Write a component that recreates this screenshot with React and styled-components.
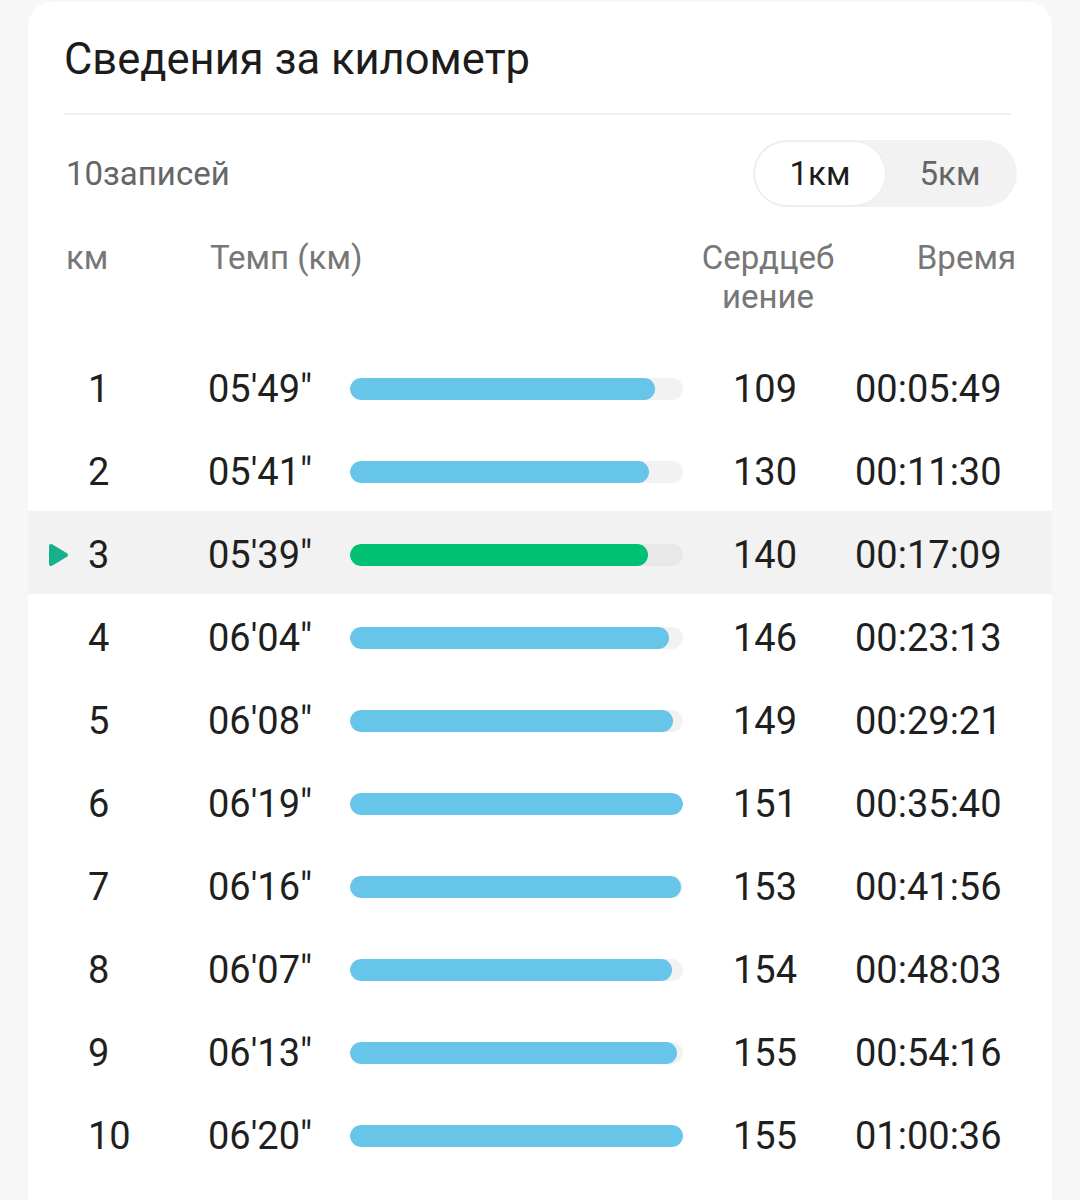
import React, { useState } from 'react';
import styled, { createGlobalStyle } from 'styled-components';

const GlobalStyle = createGlobalStyle`
  body {
    margin: 0;
    background: #f7f7f7;
    font-family: Roboto, "Noto Sans", "Liberation Sans", sans-serif;
  }
`;

const Card = styled.div`
  margin: 2px 28px 0;
  background: #ffffff;
  border-radius: 24px 24px 0 0;
  padding-bottom: 40px;
`;

const Title = styled.h1`
  margin: 0;
  padding: 33px 36px 0;
  font-size: 43.5px;
  line-height: 50px;
  font-weight: 400;
  color: #1c1c1c;
`;

const Divider = styled.div`
  height: 2px;
  background: #f0f0f0;
  margin: 28px 41px 0 36px;
`;

const SubRow = styled.div`
  display: flex;
  align-items: center;
  justify-content: space-between;
  margin-top: 25px;
  padding: 0 35px 0 38px;
`;

const Count = styled.span`
  font-size: 33px;
  color: #666;
`;

const Toggle = styled.div`
  display: flex;
  width: 264px;
  height: 67px;
  box-sizing: border-box;
  padding: 2px;
  border-radius: 34px;
  background: #f2f2f2;
`;

const ToggleItem = styled.button`
  flex: 1;
  border: none;
  border-radius: 32px;
  font-family: inherit;
  font-size: 33px;
  cursor: pointer;
  background: ${(p) => (p.$active ? '#ffffff' : 'transparent')};
  color: ${(p) => (p.$active ? '#1c1c1c' : '#666')};
  box-shadow: ${(p) => (p.$active ? '0 0 0 1px #ececec' : 'none')};
`;

const Header = styled.div`
  display: grid;
  grid-template-columns: 144px 472px 172px 1fr;
  margin-top: 31px;
  padding: 0 36px 0 38px;
  font-size: 33px;
  line-height: 39px;
  color: #777;
  margin-bottom: 29px;
`;

const HeadCell = styled.div`
  text-align: ${(p) => p.$align || 'left'};
`;

const Row = styled.div`
  display: grid;
  grid-template-columns: 60px 120px 142px 333px 164px 1fr;
  align-items: center;
  height: 83px;
  box-sizing: border-box;
  padding-top: 4px;
  font-size: 38px;
  color: #1f1f1f;
  background: ${(p) => (p.$active ? '#f2f2f2' : 'transparent')};
`;

const Marker = styled.div`
  display: flex;
  justify-content: center;
  align-items: center;
`;

const Cell = styled.div`
  text-align: ${(p) => p.$align || 'left'};
  padding-left: ${(p) => p.$pl || 0}px;
`;

const Track = styled.div`
  height: 22px;
  border-radius: 11px;
  background: ${(p) => (p.$active ? '#e8e8e8' : '#f2f2f2')};
  overflow: hidden;
`;

const Fill = styled.div`
  height: 100%;
  border-radius: 11px;
  background: ${(p) => (p.$active ? '#00c172' : '#66c5e8')};
`;

const rows = [
  { km: 1, pace: "05'49\"", hr: 109, time: '00:05:49', pct: 91.6 },
  { km: 2, pace: "05'41\"", hr: 130, time: '00:11:30', pct: 89.8 },
  { km: 3, pace: "05'39\"", hr: 140, time: '00:17:09', pct: 89.5 },
  { km: 4, pace: "06'04\"", hr: 146, time: '00:23:13', pct: 95.8 },
  { km: 5, pace: "06'08\"", hr: 149, time: '00:29:21', pct: 97 },
  { km: 6, pace: "06'19\"", hr: 151, time: '00:35:40', pct: 100 },
  { km: 7, pace: "06'16\"", hr: 153, time: '00:41:56', pct: 99.4 },
  { km: 8, pace: "06'07\"", hr: 154, time: '00:48:03', pct: 96.7 },
  { km: 9, pace: "06'13\"", hr: 155, time: '00:54:16', pct: 98.2 },
  { km: 10, pace: "06'20\"", hr: 155, time: '01:00:36', pct: 100 },
];

const PlayMark = () => (
  <svg width="22" height="24" viewBox="0 0 22 24">
    <path
      d="M4 3 L19 12 L4 21 Z"
      fill="#17b08c"
      stroke="#17b08c"
      strokeWidth="4"
      strokeLinejoin="round"
    />
  </svg>
);

const App = () => {
  const [unit, setUnit] = useState(1);
  const [selected, setSelected] = useState(3);

  return (
    <>
      <GlobalStyle />
      <Card>
        <Title>Сведения за километр</Title>
        <Divider />
        <SubRow>
          <Count>10записей</Count>
          <Toggle>
            <ToggleItem $active={unit === 1} onClick={() => setUnit(1)}>1км</ToggleItem>
            <ToggleItem $active={unit === 5} onClick={() => setUnit(5)}>5км</ToggleItem>
          </Toggle>
        </SubRow>
        <Header>
          <HeadCell>км</HeadCell>
          <HeadCell>Темп (км)</HeadCell>
          <HeadCell $align="center">Сердцеб<br />иение</HeadCell>
          <HeadCell $align="right">Время</HeadCell>
        </Header>
        {rows.map((r) => {
          const active = r.km === selected;
          return (
            <Row key={r.km} $active={active} onClick={() => setSelected(r.km)}>
              <Marker>{active && <PlayMark />}</Marker>
              <Cell>{r.km}</Cell>
              <Cell>{r.pace}</Cell>
              <Track $active={active}>
                <Fill $active={active} style={{ width: r.pct + '%' }} />
              </Track>
              <Cell $align="center">{r.hr}</Cell>
              <Cell $pl={8}>{r.time}</Cell>
            </Row>
          );
        })}
      </Card>
    </>
  );
};

export default App;
